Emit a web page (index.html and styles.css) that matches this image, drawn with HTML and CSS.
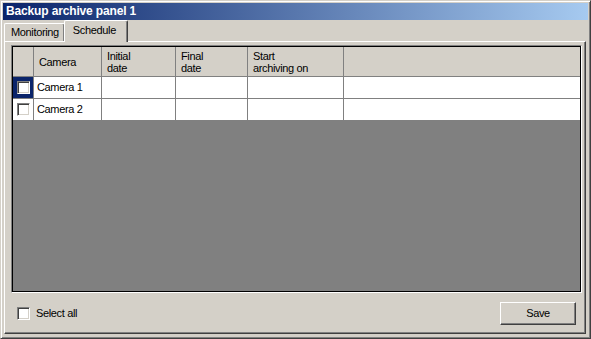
FILE: index.html
```html
<!DOCTYPE html>
<html lang="en">
<head>
  <meta charset="UTF-8">
  <title>Backup archive panel 1</title>
<link rel="stylesheet" href="styles.css">
</head>
<body>

	<div class="window">
		<div class="titlebar">Backup archive panel 1</div>

		<div class="tabs">
			<div class="tab">Monitoring</div>
			<div class="tab tab-active">Schedule</div>
		</div>

		<div class="panel">
			<div class="grid-frame">
				<div class="grid">
					<div class="row head">
						<div class="cell"></div>
						<div class="cell">Camera</div>
						<div class="cell">Initial<br>date</div>
						<div class="cell">Final<br>date</div>
						<div class="cell">Start<br>archiving on</div>
						<div class="cell last"></div>
					</div>
					<div class="row">
						<div class="cell check-cell selected"><span class="check"></span></div>
						<div class="cell">Camera 1</div>
						<div class="cell"></div>
						<div class="cell"></div>
						<div class="cell"></div>
						<div class="cell last"></div>
					</div>
					<div class="row">
						<div class="cell check-cell"><span class="check"></span></div>
						<div class="cell">Camera 2</div>
						<div class="cell"></div>
						<div class="cell"></div>
						<div class="cell"></div>
						<div class="cell last"></div>
					</div>
				</div>
			</div>

			<div class="footer">
				<label class="select-all"><span class="check"></span>Select all</label>
				<button class="button" type="button">Save</button>
			</div>
		</div>
	</div>

</body>
</html>
```

FILE: styles.css
```css
*{
	box-sizing: border-box;
}
body{
	margin: 0;
	background: #d4d0c8;
	font-family: "Liberation Sans", Arial, sans-serif;
	font-size: 11px;
	letter-spacing: -0.35px;
	color: #000;
}

.window{
	width: 591px;
	height: 339px;
	padding: 2px;
	display: flex;
	flex-direction: column;
	border: 1px solid;
	border-color: #d4d0c8 #404040 #404040 #d4d0c8;
	box-shadow: inset 1px 1px #fff, inset -1px -1px #808080;
}

.titlebar{
	height: 17px;
	line-height: 17px;
	padding-left: 3px;
	color: #fff;
	font-weight: bold;
	font-size: 12px;
	letter-spacing: -0.15px;
	background: linear-gradient(to right, #0a246a, #a6caf0);
}

/* tabs */
.tabs{
	height: 21px;
	display: flex;
	align-items: flex-end;
	padding-left: 1px;
}
.tab{
	height: 18px;
	line-height: 17px;
	padding: 0 5px 0 6px;
	border-top: 1px solid #fff;
	border-left: 1px solid #fff;
	border-right: 1px solid #404040;
	border-radius: 2px 2px 0 0;
	box-shadow: inset -1px 0 #808080;
}
.tab-active{
	position: relative;
	z-index: 1;
	height: 22px;
	margin-bottom: -1px;
	margin-left: -1px;
	padding: 1px 11px 0 8px;
	background: #d4d0c8;
}

.panel{
	flex: 1;
	display: flex;
	flex-direction: column;
	margin: 0 2px 2px 1px;
	padding: 3px 3px 0 6px;
	border: 1px solid;
	border-color: #fff #404040 #404040 #fff;
	box-shadow: inset -1px -1px #808080;
}

/* grid */
.grid-frame{
	height: 248px;
	border: 1px solid;
	border-color: #808080 #fff #fff #808080;
}
.grid{
	height: 100%;
	border: 1px solid #000;
	background: #808080;
}
.row{
	display: grid;
	grid-template-columns: 21px 68px 74px 72px 96px 1fr;
	height: 22px;
	background: #fff;
}
.row.head{
	height: 30px;
	background: #d4d0c8;
}
.cell{
	border-right: 1px solid #808080;
	border-bottom: 1px solid #808080;
	padding-left: 3px;
	line-height: 21px;
	white-space: nowrap;
}
.head .cell{
	display: flex;
	align-items: center;
	padding: 1px 0 0 5px;
	line-height: 12px;
}
.cell.last{
	border-right: none;
}
.check-cell{
	display: flex;
	align-items: center;
	justify-content: center;
	padding: 0;
}
.check-cell.selected{
	background: #0a246a;
}

.check{
	display: inline-block;
	width: 13px;
	height: 13px;
	background: #fff;
	border: 1px solid;
	border-color: #808080 #fff #fff #808080;
	box-shadow: inset 1px 1px #404040, inset -1px -1px #d4d0c8;
}

/* footer */
.footer{
	flex: 1;
	display: flex;
	align-items: center;
	justify-content: space-between;
	padding: 0 6px 0 6px;
}
.select-all{
	display: flex;
	align-items: center;
	gap: 6px;
}
.button{
	width: 76px;
	height: 23px;
	font-family: inherit;
	font-size: 11px;
	letter-spacing: -0.35px;
	background: #d4d0c8;
	border: 1px solid;
	border-color: #fff #404040 #404040 #fff;
	box-shadow: inset -1px -1px #808080;
	padding: 0;
}
```
